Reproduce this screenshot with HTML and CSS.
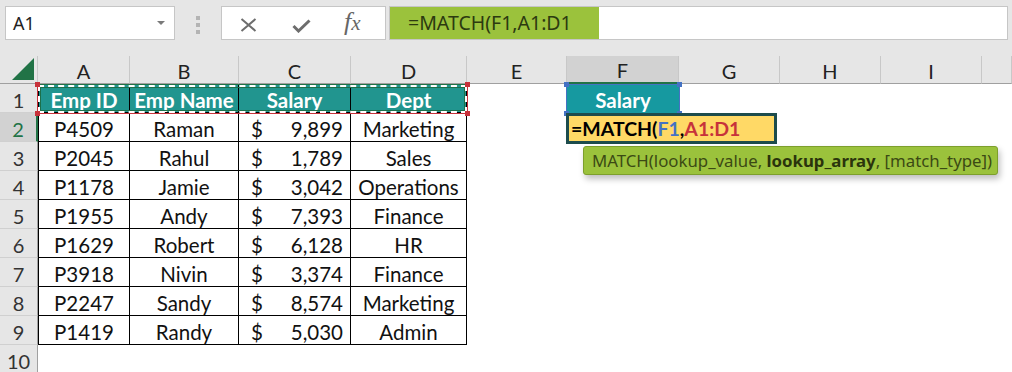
FILE: index.html
```html
<!DOCTYPE html>
<html lang="en">
<head>
  <meta charset="UTF-8">
  <meta name="viewport" content="width=device-width, initial-scale=1.0">
  <title>MATCH lookup</title>
  <link rel="stylesheet" href="styles.css">
</head>
<body>
  <!-- Name box and formula bar -->
  <div class="topbar">
    <div class="namebox">
      <span>A1</span>
      <span class="caret"></span>
    </div>
    <div class="grip"><i></i><i></i><i></i></div>
    <div class="fx-buttons">
      <svg class="icon-x" width="17" height="14" viewBox="0 0 17 14">
        <path d="M1.5 1 L15.5 13 M15.5 1 L1.5 13" stroke="#6d6d6d" stroke-width="2" fill="none"/>
      </svg>
      <svg class="icon-check" width="19" height="14" viewBox="0 0 19 14">
        <path d="M1.5 7 L6.5 12 L17.5 1.5" stroke="#6d6d6d" stroke-width="3" fill="none"/>
      </svg>
      <span class="fx">f<span class="fx-x">x</span></span>
    </div>
    <div class="formula">
      <span class="formula-text">=MATCH(F1,A1:D1</span>
    </div>
  </div>

  <!-- Worksheet -->
  <div class="sheet">
    <div class="row head">
      <div class="corner">
        <svg width="22" height="22" viewBox="0 0 22 22"><polygon points="0,22 22,22 22,0" fill="#217346"/></svg>
      </div>
      <div class="col">A</div>
      <div class="col">B</div>
      <div class="col">C</div>
      <div class="col">D</div>
      <div class="col">E</div>
      <div class="col active">F</div>
      <div class="col">G</div>
      <div class="col">H</div>
      <div class="col">I</div>
      <div class="col"></div>
    </div>

    <div class="row">
      <div class="num">1</div>
      <div class="cell t th">Emp ID</div>
      <div class="cell t th">Emp Name</div>
      <div class="cell t th">Salary</div>
      <div class="cell t th">Dept</div>
      <div class="cell"></div>
      <div class="cell lookup">Salary</div>
      <div class="cell"></div>
      <div class="cell"></div>
      <div class="cell"></div>
      <div class="cell"></div>
    </div>

    <div class="row">
      <div class="num active">2</div>
      <div class="cell t">P4509</div>
      <div class="cell t">Raman</div>
      <div class="cell t money"><span>$</span><span>9,899</span></div>
      <div class="cell t">Marketing</div>
      <div class="cell"></div><div class="cell"></div><div class="cell"></div>
      <div class="cell"></div><div class="cell"></div><div class="cell"></div>
    </div>

    <div class="row">
      <div class="num">3</div>
      <div class="cell t">P2045</div>
      <div class="cell t">Rahul</div>
      <div class="cell t money"><span>$</span><span>1,789</span></div>
      <div class="cell t">Sales</div>
      <div class="cell"></div><div class="cell"></div><div class="cell"></div>
      <div class="cell"></div><div class="cell"></div><div class="cell"></div>
    </div>

    <div class="row">
      <div class="num">4</div>
      <div class="cell t">P1178</div>
      <div class="cell t">Jamie</div>
      <div class="cell t money"><span>$</span><span>3,042</span></div>
      <div class="cell t">Operations</div>
      <div class="cell"></div><div class="cell"></div><div class="cell"></div>
      <div class="cell"></div><div class="cell"></div><div class="cell"></div>
    </div>

    <div class="row">
      <div class="num">5</div>
      <div class="cell t">P1955</div>
      <div class="cell t">Andy</div>
      <div class="cell t money"><span>$</span><span>7,393</span></div>
      <div class="cell t">Finance</div>
      <div class="cell"></div><div class="cell"></div><div class="cell"></div>
      <div class="cell"></div><div class="cell"></div><div class="cell"></div>
    </div>

    <div class="row">
      <div class="num">6</div>
      <div class="cell t">P1629</div>
      <div class="cell t">Robert</div>
      <div class="cell t money"><span>$</span><span>6,128</span></div>
      <div class="cell t">HR</div>
      <div class="cell"></div><div class="cell"></div><div class="cell"></div>
      <div class="cell"></div><div class="cell"></div><div class="cell"></div>
    </div>

    <div class="row">
      <div class="num">7</div>
      <div class="cell t">P3918</div>
      <div class="cell t">Nivin</div>
      <div class="cell t money"><span>$</span><span>3,374</span></div>
      <div class="cell t">Finance</div>
      <div class="cell"></div><div class="cell"></div><div class="cell"></div>
      <div class="cell"></div><div class="cell"></div><div class="cell"></div>
    </div>

    <div class="row">
      <div class="num">8</div>
      <div class="cell t">P2247</div>
      <div class="cell t">Sandy</div>
      <div class="cell t money"><span>$</span><span>8,574</span></div>
      <div class="cell t">Marketing</div>
      <div class="cell"></div><div class="cell"></div><div class="cell"></div>
      <div class="cell"></div><div class="cell"></div><div class="cell"></div>
    </div>

    <div class="row">
      <div class="num">9</div>
      <div class="cell t">P1419</div>
      <div class="cell t">Randy</div>
      <div class="cell t money"><span>$</span><span>5,030</span></div>
      <div class="cell t">Admin</div>
      <div class="cell"></div><div class="cell"></div><div class="cell"></div>
      <div class="cell"></div><div class="cell"></div><div class="cell"></div>
    </div>

    <div class="row">
      <div class="num">10</div>
      <div class="cell"></div><div class="cell"></div><div class="cell"></div>
      <div class="cell"></div><div class="cell"></div><div class="cell"></div>
      <div class="cell"></div><div class="cell"></div><div class="cell"></div>
      <div class="cell"></div>
    </div>

    <!-- Range highlights drawn over the grid -->
    <div class="range-red">
      <div class="ants"></div>
      <i class="knob tl"></i><i class="knob tr"></i><i class="knob bl"></i><i class="knob br"></i>
    </div>
    <div class="range-blue">
      <i class="knob tl"></i><i class="knob tr"></i><i class="knob bl"></i><i class="knob br"></i>
    </div>

    <div class="editor">=MATCH(<span class="ref-blue">F1</span>,<span class="ref-red">A1:D1</span></div>

    <div class="tooltip">MATCH(lookup_value, <b>lookup_array</b>, [match_type])</div>
  </div>
</body>
</html>
```

FILE: styles.css
```css
body {
  margin: 0;
  background: #fff;
  font-family: Lato, "Liberation Sans", sans-serif;
  overflow: hidden;
}

/* ---------- formula bar ---------- */

.topbar {
  height: 56px;
  background: #e6e6e6;
  display: flex;
  align-items: flex-start;
  padding: 6px 4px 0 5px;
  box-sizing: border-box;
}

.namebox {
  width: 170px;
  height: 34px;
  box-sizing: border-box;
  background: #fff;
  border: 1px solid #c6c6c6;
  display: flex;
  align-items: center;
  justify-content: space-between;
  padding: 0 9px 0 7px;
  font-family: "Noto Sans", "Open Sans", sans-serif;
  font-size: 18px;
  color: #222;
}

.caret {
  width: 0;
  height: 0;
  border-left: 4px solid transparent;
  border-right: 4px solid transparent;
  border-top: 4px solid #7a7a7a;
}

.grip {
  width: 46px;
  display: flex;
  flex-direction: column;
  align-items: center;
  gap: 3px;
  padding-top: 10px;
}

.grip i {
  display: block;
  width: 4px;
  height: 4px;
  background: #b4b4b4;
}

.fx-buttons {
  width: 165px;
  height: 34px;
  box-sizing: border-box;
  background: #fff;
  border: 1px solid #c6c6c6;
  display: flex;
  align-items: center;
  padding-left: 18px;
}

.icon-x {
  margin-top: 4px;
}

.icon-check {
  margin-left: 35px;
  margin-top: 6px;
}

.fx {
  margin-left: 33px;
  font-family: "Liberation Serif", serif;
  font-style: italic;
  font-size: 26px;
  color: #666;
  margin-top: -3px;
}

.fx-x {
  font-size: 21px;
}

.formula {
  flex: 1;
  margin-left: 3px;
  height: 34px;
  box-sizing: border-box;
  background: #fff;
  border: 1px solid #c6c6c6;
  display: flex;
}

.formula-text {
  width: 209px;
  box-sizing: border-box;
  background: #9bc23c;
  padding-left: 18px;
  font-family: "Noto Sans", "Open Sans", sans-serif;
  font-size: 19.5px;
  line-height: 32px;
  color: #2c3a10;
}

/* ---------- worksheet grid ---------- */

.sheet {
  position: relative;
}

.row {
  display: grid;
  grid-template-columns: 38px 92px 109px 112px 116px 100px 112px 101px 101px 101px 1fr;
  height: 29px;
}

.row.head {
  height: 28px;
}

.corner,
.col {
  background: #e6e6e6;
  border-right: 1px solid #c8c8c8;
  border-bottom: 1px solid #a0a0a0;
  box-sizing: border-box;
}

.corner {
  display: flex;
  align-items: flex-end;
  justify-content: flex-end;
  padding: 0 3px 3px 0;
}

.col {
  display: flex;
  align-items: center;
  justify-content: center;
  padding-top: 2px;
  font-size: 20px;
  color: #222;
}

.col.active {
  background: #d2d2d2;
  border-bottom: 2px solid #217346;
}

.num {
  background: #e6e6e6;
  border-right: 1px solid #a0a0a0;
  border-bottom: 1px solid #d0d0d0;
  box-sizing: border-box;
  display: flex;
  align-items: center;
  justify-content: center;
  padding-top: 3px;
  font-size: 20px;
  color: #333;
}

.num.active {
  background: #d2d2d2;
  color: #217346;
  border-right: 2px solid #217346;
}

.cell {
  box-sizing: border-box;
  display: flex;
  align-items: center;
  justify-content: center;
  padding-top: 3px;
  font-size: 20.5px;
  color: #111;
  white-space: nowrap;
}

.cell.t {
  border-right: 1px solid #000;
  border-bottom: 1px solid #000;
}

.row > .cell.t:nth-child(2) {
  border-left: 1px solid #000;
}

.cell.th {
  background: #21958f;
  color: #fff;
  font-weight: bold;
}

.cell.lookup {
  background: #1699a0;
  color: #fff;
  font-weight: bold;
}

.cell.money {
  justify-content: space-between;
  padding: 3px 7px 0 12px;
}

/* ---------- overlays ---------- */

.range-red {
  position: absolute;
  left: 37px;
  top: 28px;
  width: 431px;
  height: 30px;
  box-sizing: border-box;
  border: 1px solid #c7323b;
  border-top-color: #217346;
}

.ants {
  position: absolute;
  inset: 0;
  border: 2px dashed #fff;
  outline: 1px solid #1d6f4a;
  outline-offset: -3px;
}

.range-blue {
  position: absolute;
  left: 566px;
  top: 28px;
  width: 114px;
  height: 30px;
  box-sizing: border-box;
  border: 1px solid #4472c4;
}

.knob {
  position: absolute;
  width: 5px;
  height: 5px;
  background: #c7323b;
}

.range-blue .knob {
  background: #4472c4;
}

.knob.tl { left: -3px; top: -3px; }
.knob.tr { right: -3px; top: -3px; }
.knob.bl { left: -3px; bottom: -3px; }
.knob.br { right: -3px; bottom: -3px; }

.editor {
  position: absolute;
  left: 566px;
  top: 57px;
  width: 211px;
  height: 31px;
  box-sizing: border-box;
  background: #ffd966;
  border: 3px solid #1d4c4c;
  padding-left: 2px;
  font-size: 19.5px;
  font-weight: bold;
  line-height: 26px;
  color: #000;
  white-space: nowrap;
}

.ref-blue {
  color: #4472c4;
}

.ref-red {
  color: #c7323b;
}

.tooltip {
  position: absolute;
  left: 583px;
  top: 90px;
  width: 415px;
  height: 29px;
  box-sizing: border-box;
  background: #9bc23c;
  border: 1px solid #7d9f2c;
  border-radius: 3px;
  box-shadow: 2px 4px 6px rgba(0, 0, 0, 0.25);
  padding-left: 8px;
  font-family: "Noto Sans", "Open Sans", sans-serif;
  font-size: 16.8px;
  line-height: 27px;
  color: #3b4a14;
  white-space: nowrap;
}

.tooltip b {
  color: #2a340c;
}
```
